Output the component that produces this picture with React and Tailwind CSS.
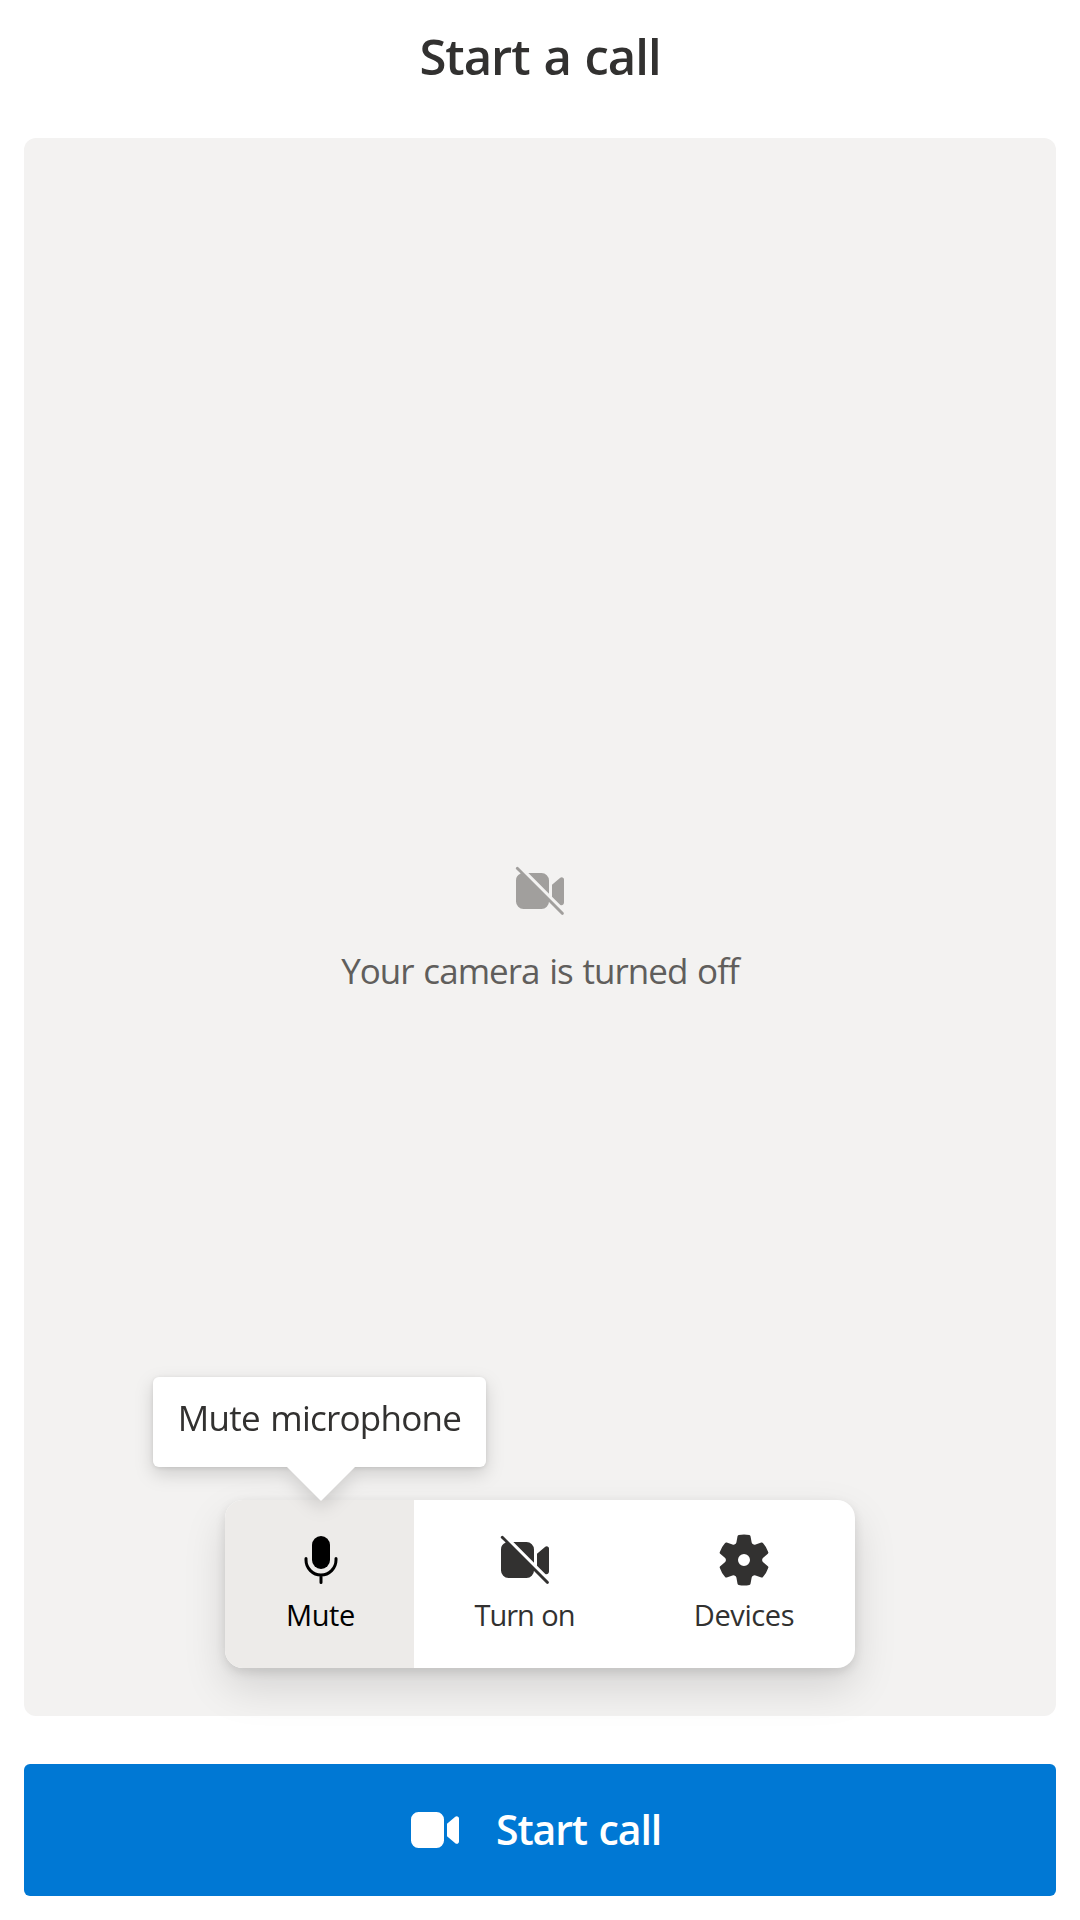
const VIDEO_BODY =
  "M13 6.5A2.5 2.5 0 0 0 10.5 4h-6A2.5 2.5 0 0 0 2 6.5v7A2.5 2.5 0 0 0 4.5 16h6a2.5 2.5 0 0 0 2.5-2.5v-7Z";
const VIDEO_LENS = "M14 7.93v4.15l2.76 2.35a.75.75 0 0 0 1.24-.57V6.19c0-.64-.76-.99-1.24-.57L14 7.93Z";

function Icon({ children, className = "" }) {
  return (
    <svg viewBox="0 0 20 20" fill="currentColor" aria-hidden="true" className={`block size-[60px] shrink-0 ${className}`}>
      {children}
    </svg>
  );
}

function VideoIcon({ className }) {
  return (
    <Icon className={className}>
      <path d={VIDEO_BODY} />
      <path d={VIDEO_LENS} />
    </Icon>
  );
}

function VideoOffIcon({ className }) {
  return (
    <Icon className={className}>
      <path d="M2.85 2.15a.5.5 0 1 0-.7.7L3.57 4.18A2.5 2.5 0 0 0 2 6.5v7A2.5 2.5 0 0 0 4.5 16h6a2.5 2.5 0 0 0 2.5-2.5v.2l4.15 4.15a.5.5 0 0 0 .7-.7l-15-15Z" />
      <path d="M6.12 4H10.5A2.5 2.5 0 0 1 13 6.5v4.38L6.12 4Z" />
      <path d="M14 7.93v3.95l2.78 2.78c.62.24 1.22-.16 1.22-.8V6.19c0-.64-.76-.99-1.24-.57L14 7.93Z" />
    </Icon>
  );
}

function MicIcon() {
  return (
    <Icon>
      <rect x="7" y="2" width="6" height="11" rx="3" />
      <path
        d="M5 9.5v.5a5 5 0 0 0 10 0v-.5M10 15v2.5"
        fill="none"
        stroke="currentColor"
        strokeLinecap="round"
      />
    </Icon>
  );
}

function SettingsIcon() {
  return (
    <Icon>
      <path
        fillRule="evenodd"
        d="M1.91 7.38A8.5 8.5 0 0 1 3.7 4.3a.5.5 0 0 1 .54-.13l1.92.68a1 1 0 0 0 1.32-.76l.36-2a.5.5 0 0 1 .4-.4 8.53 8.53 0 0 1 3.55 0c.2.04.35.2.38.4l.37 2a1 1 0 0 0 1.32.76l1.92-.68a.5.5 0 0 1 .54.13 8.5 8.5 0 0 1 1.78 3.08c.06.2 0 .4-.15.54l-1.56 1.32a1 1 0 0 0 0 1.52l1.56 1.32a.5.5 0 0 1 .15.54 8.5 8.5 0 0 1-1.78 3.08.5.5 0 0 1-.54.13l-1.92-.68a1 1 0 0 0-1.32.76l-.37 2a.5.5 0 0 1-.38.4 8.53 8.53 0 0 1-3.56 0 .5.5 0 0 1-.39-.4l-.36-2a1 1 0 0 0-1.32-.76l-1.92.68a.5.5 0 0 1-.54-.13 8.5 8.5 0 0 1-1.78-3.08.5.5 0 0 1 .15-.54l1.56-1.32a1 1 0 0 0 0-1.52L2.06 7.92a.5.5 0 0 1-.15-.54ZM8 10a2 2 0 1 0 4 0 2 2 0 0 0-4 0Z"
      />
    </Icon>
  );
}

function Tooltip({ children }) {
  return (
    <div
      role="tooltip"
      className="absolute bottom-[201px] left-[-72px] h-[90px] w-[333px] drop-shadow-[0_7px_9px_rgba(0,0,0,0.15)]"
    >
      <div className="flex h-full items-start justify-center rounded-md bg-white pt-[17px] text-[35px] leading-[48px] tracking-[-0.75px] [word-spacing:2px] whitespace-nowrap text-[#323130] shadow-[0_1px_5px_rgba(0,0,0,0.11)]">
        {children}
      </div>
      <svg viewBox="0 0 68 34" className="absolute top-[90px] left-[134px] h-[34px] w-[68px]" aria-hidden="true">
        <path d="M0 0h68L34 34Z" fill="#fff" />
      </svg>
    </div>
  );
}

function ControlButton({ icon, label, className }) {
  return (
    <button type="button" className={`flex h-full flex-col items-center pt-[30px] ${className}`}>
      {icon}
      <span className="mt-[5px] text-[29px] leading-[40px] whitespace-nowrap">{label}</span>
    </button>
  );
}

export default function App() {
  return (
    <main className="flex h-[1920px] w-[1080px] flex-col overflow-hidden bg-white px-6 pb-6 font-['Open_Sans','Noto_Sans',sans-serif] text-[#323130]">
      <h1 className="flex h-[138px] shrink-0 items-start justify-center pt-[24px] text-[49px] leading-[64px] font-semibold tracking-[-1px] [word-spacing:2px]">
        Start a call
      </h1>

      <section className="flex h-[1578px] shrink-0 flex-col items-center rounded-xl bg-[#f3f2f1]">
        <div className="flex h-[1362px] flex-col items-center pt-[723px]">
          <VideoOffIcon className="text-[#a19f9d]" />
          <p className="mt-[26px] text-[35px] leading-[48px] tracking-[-0.96px] [word-spacing:1.5px] whitespace-nowrap text-[#605e5c]">
            Your camera is turned off
          </p>
        </div>

        <div className="relative h-[168px] w-[630px] rounded-[18px] bg-white shadow-[0_19px_43px_rgba(0,0,0,0.13),0_4px_11px_rgba(0,0,0,0.11)]">
          <div className="flex h-full overflow-hidden rounded-[18px]">
            <ControlButton
              icon={<MicIcon />}
              label="Mute"
              className="w-[189px] bg-[#edebe9] pl-[2px] tracking-[-0.4px] text-black"
            />
            <ControlButton icon={<VideoOffIcon />} label="Turn on" className="w-[221px] tracking-[-1px] [word-spacing:1px]" />
            <ControlButton icon={<SettingsIcon />} label="Devices" className="w-[220px] pr-[2px] tracking-[-0.4px]" />
          </div>
          <Tooltip>Mute microphone</Tooltip>
        </div>
      </section>

      <button
        type="button"
        className="mt-12 flex h-[132px] w-full shrink-0 items-center gap-[31px] rounded-md bg-[#0078d4] pl-[381px] text-[41px] leading-[56px] font-semibold tracking-[-1.1px] [word-spacing:2px] text-white"
      >
        <VideoIcon />
        <span className="-mt-0.5">Start call</span>
      </button>
    </main>
  );
}
